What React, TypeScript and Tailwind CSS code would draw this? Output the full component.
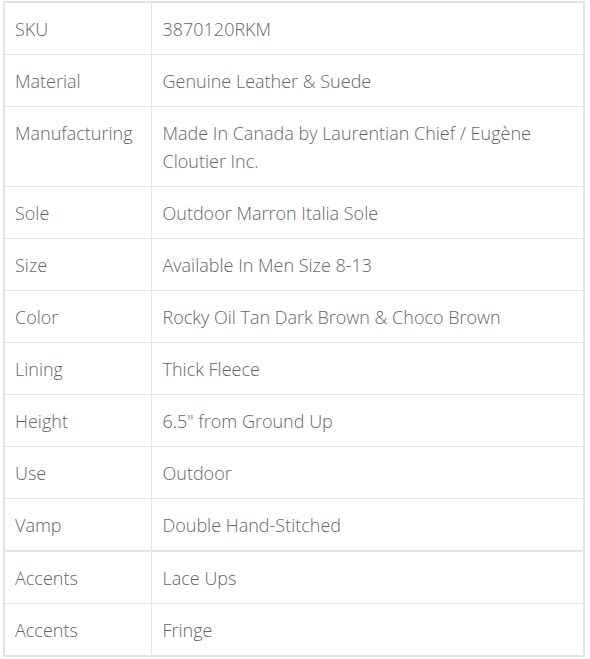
import React from "react";

const rows: [string, string][] = [
  ["SKU", "3870120RKM"],
  ["Material", "Genuine Leather & Suede"],
  ["Manufacturing", "Made In Canada by Laurentian Chief / Eugène Cloutier Inc."],
  ["Sole", "Outdoor Marron Italia Sole"],
  ["Size", "Available In Men Size 8-13"],
  ["Color", "Rocky Oil Tan Dark Brown & Choco Brown"],
  ["Lining", "Thick Fleece"],
  ["Height", "6.5\" from Ground Up"],
  ["Use", "Outdoor"],
  ["Vamp", "Double Hand-Stitched"],
  ["Accents", "Lace Ups"],
  ["Accents", "Fringe"],
];

const App = () => {
  return (
    <div className="w-[590px] h-[659px] bg-white pl-[3px] pt-[1px]">
      <table className="w-[582px] border-collapse border-2 border-[#e3e3e3] font-['Open_Sans',sans-serif] text-[18px] leading-[28px] text-[#666666] font-light">
        <tbody>
          {rows.map(([label, value], i) => (
            <tr
              key={i}
              className={
                i === 9
                  ? "border-b-2 border-[#e3e3e3]"
                  : "border-b border-[#e3e3e3]"
              }
            >
              <td className="w-[147px] border-r border-[#e3e3e3] pl-[10px] pr-2 pt-[12px] pb-[11px] align-top">
                {label}
              </td>
              <td className="pl-[11px] pr-4 pt-[12px] pb-[11px] align-top">
                {value}
              </td>
            </tr>
          ))}
        </tbody>
      </table>
    </div>
  );
};

export default App;
